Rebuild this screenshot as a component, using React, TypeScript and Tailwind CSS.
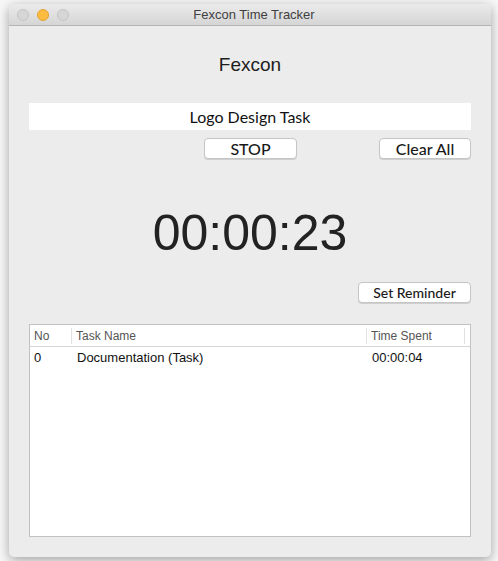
import React from 'react';

const sans = { fontFamily: '"Liberation Sans", Arial, sans-serif' };
const avenir = { fontFamily: 'Lato, "Noto Sans", sans-serif' };

function Light({ color }: { color: string }) {
  return <span className={`block w-[12px] h-[12px] rounded-full border ${color}`} />;
}

function MacButton({ label, className }: { label: string; className: string }) {
  return (
    <button
      className={`h-[21px] bg-white rounded-[4px] border border-[#c5c5c5] shadow-[0_1px_0_rgba(0,0,0,0.12)] text-[#1a1a1a] font-medium leading-none ${className}`}
      style={avenir}
    >
      {label}
    </button>
  );
}

function App() {
  const rows = [{ no: '0', name: 'Documentation (Task)', time: '00:00:04' }];

  return (
    <div className="w-[498px] h-[561px] bg-[#f7f7f7] overflow-hidden pt-[4px] pl-[9px]">
      <div className="w-[482px] h-[553px] rounded-[5px] bg-[#ececec] shadow-[0_3px_12px_rgba(0,0,0,0.35)] flex flex-col overflow-hidden">
        {/* title bar */}
        <div className="h-[22px] flex items-center px-[8px] bg-gradient-to-b from-[#ebebeb] to-[#d5d5d5] border-b border-[#b4b4b4]">
          <div className="flex gap-[8px]">
            <Light color="bg-[#d6d6d6] border-[#c3c3c3]" />
            <Light color="bg-[#fdbb3f] border-[#e1a334]" />
            <Light color="bg-[#d6d6d6] border-[#c3c3c3]" />
          </div>
          <span className="flex-1 text-center text-[13px] text-[#404040] -ml-[44px]" style={sans}>
            Fexcon Time Tracker
          </span>
        </div>

        {/* content */}
        <div className="flex-1 flex flex-col px-[20px]">
          <div className="text-center text-[19px] text-[#1e1e1e] mt-[29px] leading-none" style={sans}>
            Fexcon
          </div>

          <div className="mt-[29px] h-[27px] bg-white flex items-center justify-center text-[16px] text-[#111]" style={avenir}>
            Logo Design Task
          </div>

          <div className="mt-[8px] flex">
            <MacButton label="STOP" className="ml-[175px] w-[93px] text-[16px]" />
            <MacButton label="Clear All" className="ml-auto w-[92px] text-[16px]" />
          </div>

          <div className="mt-[49px] text-center text-[50px] text-[#222] leading-none" style={sans}>
            00:00:23
          </div>

          <div className="mt-[24px] flex justify-end">
            <MacButton label="Set Reminder" className="w-[113px] text-[14px]" />
          </div>

          <div className="mt-[21px] h-[213px] bg-white border border-[#c2c2c2] text-[13px]" style={sans}>
            <div className="h-[22px] flex items-center border-b border-[#d6d6d6] text-[12px] text-[#555]">
              <div className="w-[42px] pl-[4px] border-r border-[#e2e2e2] h-[16px] flex items-center">No</div>
              <div className="w-[295px] pl-[4px] border-r border-[#e2e2e2] h-[16px] flex items-center">Task Name</div>
              <div className="w-[98px] pl-[4px] border-r border-[#e2e2e2] h-[16px] flex items-center">Time Spent</div>
            </div>
            {rows.map(r => (
              <div key={r.no} className="h-[22px] flex items-center text-[#111]">
                <div className="w-[42px] pl-[4px]">{r.no}</div>
                <div className="w-[295px] pl-[5px]">{r.name}</div>
                <div className="pl-[5px]">{r.time}</div>
              </div>
            ))}
          </div>
        </div>
      </div>
    </div>
  );
}

export default App;
